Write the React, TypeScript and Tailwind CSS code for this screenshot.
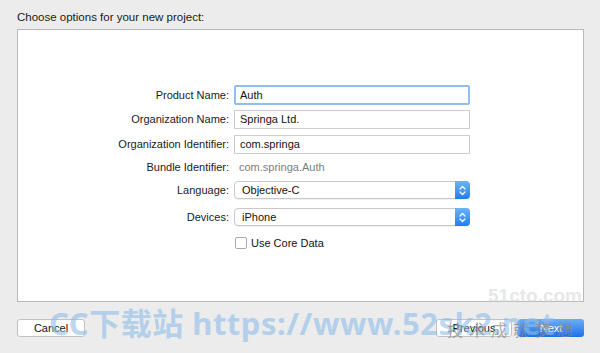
import React from "react";

const font = { fontFamily: '"Liberation Sans", Arial, sans-serif' };

function Label({ children }: { children: React.ReactNode }) {
  return (
    <div className="w-[216px] shrink-0 pr-[5px] text-right text-[11px] text-[#1a1a1a]">{children}</div>
  );
}

function Stepper() {
  return (
    <div className="absolute right-[-1px] top-[-1px] bottom-[-1px] w-[15px] rounded-r-[4px] bg-gradient-to-b from-[#6cb3fa] to-[#1a7ef0] flex items-center justify-center">
      <svg width="7" height="11" viewBox="0 0 7 11" fill="none" stroke="white" strokeWidth="1.3" strokeLinecap="round" strokeLinejoin="round">
        <path d="M1 4 L3.5 1.5 L6 4" />
        <path d="M1 7 L3.5 9.5 L6 7" />
      </svg>
    </div>
  );
}

export default function App() {
  return (
    <div className="relative w-[600px] h-[353px] bg-[#ececec] overflow-hidden" style={font}>
      <div className="pl-[17px] pt-[10px] h-[29px] text-[11.5px] text-[#1a1a1a] leading-[14px]">
        Choose options for your new project:
      </div>
      <div className="ml-[17px] w-[567px] h-[273px] bg-white border border-[#b9b9b9] pt-[53px]">
        <div className="flex items-center h-[24px]">
          <Label>Product Name:</Label>
          <div className="w-[236px] h-[20px] border-2 border-[#8ebdf0] rounded-[2px] flex items-center px-[4px] text-[11px] text-[#111]">Auth</div>
        </div>
        <div className="flex items-center h-[24px]">
          <Label>Organization Name:</Label>
          <div className="w-[236px] h-[19px] border border-[#cdcdcd] flex items-center px-[5px] text-[11px] text-[#111]">Springa Ltd.</div>
        </div>
        <div className="flex items-center h-[26px]">
          <Label>Organization Identifier:</Label>
          <div className="w-[236px] h-[19px] border border-[#cdcdcd] flex items-center px-[5px] text-[11px] text-[#111]">com.springa</div>
        </div>
        <div className="flex items-center h-[20px]">
          <Label>Bundle Identifier:</Label>
          <div className="pl-[5px] text-[11px] text-[#7d7d7d]">com.springa.Auth</div>
        </div>
        <div className="flex items-center h-[26px]">
          <Label>Language:</Label>
          <div className="relative w-[236px] h-[18px] border border-[#c8c8c8] rounded-[4px] flex items-center px-[7px] text-[11px] text-[#111] shadow-[0_1px_0_rgba(0,0,0,0.06)]">
            Objective-C
            <Stepper />
          </div>
        </div>
        <div className="flex items-center h-[28px]">
          <Label>Devices:</Label>
          <div className="relative w-[236px] h-[18px] border border-[#c8c8c8] rounded-[4px] flex items-center px-[7px] text-[11px] text-[#111] shadow-[0_1px_0_rgba(0,0,0,0.06)]">
            iPhone
            <Stepper />
          </div>
        </div>
        <div className="flex items-center h-[24px]">
          <div className="w-[216px] shrink-0" />
          <div className="flex items-center gap-[4px] pl-[1px]">
            <div className="w-[12px] h-[12px] border border-[#a8a8a8] rounded-[2px] bg-white" />
            <span className="text-[11px] text-[#111]">Use Core Data</span>
          </div>
        </div>
      </div>
      <div className="flex items-center justify-between pl-[17px] pr-[16px] pt-[17px]">
        <div className="w-[68px] h-[18px] border border-[#c2c2c2] rounded-[3px] bg-white flex items-center justify-center text-[11px] text-[#111]">Cancel</div>
        <div className="flex gap-[6px]">
          <div className="w-[76px] h-[18px] border border-[#c2c2c2] rounded-[3px] bg-white flex items-center justify-center text-[11px] text-[#111]">Previous</div>
          <div className="w-[66px] h-[18px] rounded-[3px] bg-gradient-to-b from-[#6aaef7] to-[#1b6fe8] flex items-center justify-center text-[11px] text-white">Next</div>
        </div>
      </div>

      <div className="absolute left-[49px] top-[305px] text-[31px] font-bold text-[#8fbde9] opacity-60 whitespace-nowrap tracking-[0.5px] leading-[36px]" style={{ fontFamily: '"Noto Sans", "Noto Sans CJK SC", sans-serif' }}>
        CC下载站 https://www.52sk2.net
      </div>
      <div className="absolute left-[488px] top-[284px] text-[19px] font-bold text-[#d0d0d0] opacity-50 whitespace-nowrap leading-[24px]">51cto.com</div>
      <div className="absolute left-[447px] top-[318px] text-[16px] text-[#8a8a8a] opacity-70 whitespace-nowrap tracking-[6px] leading-[22px]" style={{ fontFamily: '"Noto Sans CJK SC", sans-serif' }}>
        技术成就梦想
      </div>
    </div>
  );
}
